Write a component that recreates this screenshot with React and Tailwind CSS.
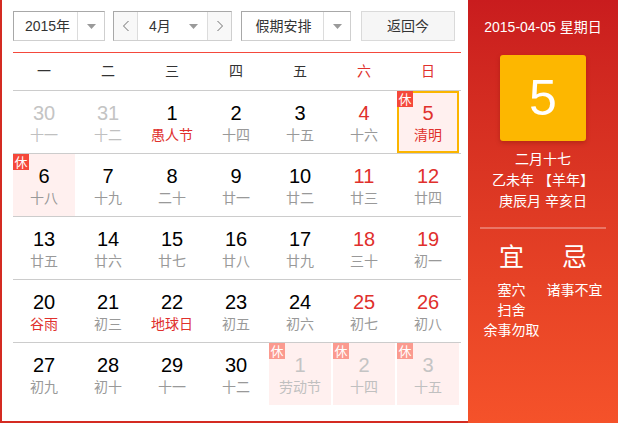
import React from 'react';

const sans = { fontFamily: '"Liberation Sans", Arial, "Noto Sans CJK SC", sans-serif' };

const weeks = [
  [
    { d: 30, l: '十一', o: true },
    { d: 31, l: '十二', o: true },
    { d: 1, l: '愚人节', f: true },
    { d: 2, l: '十四' },
    { d: 3, l: '十五' },
    { d: 4, l: '十六' },
    { d: 5, l: '清明', f: true, rest: true, today: true },
  ],
  [
    { d: 6, l: '十八', rest: true },
    { d: 7, l: '十九' },
    { d: 8, l: '二十' },
    { d: 9, l: '廿一' },
    { d: 10, l: '廿二' },
    { d: 11, l: '廿三' },
    { d: 12, l: '廿四' },
  ],
  [
    { d: 13, l: '廿五' },
    { d: 14, l: '廿六' },
    { d: 15, l: '廿七' },
    { d: 16, l: '廿八' },
    { d: 17, l: '廿九' },
    { d: 18, l: '三十' },
    { d: 19, l: '初一' },
  ],
  [
    { d: 20, l: '谷雨', f: true },
    { d: 21, l: '初三' },
    { d: 22, l: '地球日', f: true },
    { d: 23, l: '初五' },
    { d: 24, l: '初六' },
    { d: 25, l: '初七' },
    { d: 26, l: '初八' },
  ],
  [
    { d: 27, l: '初九' },
    { d: 28, l: '初十' },
    { d: 29, l: '十一' },
    { d: 30, l: '十二' },
    { d: 1, l: '劳动节', o: true, rest: true },
    { d: 2, l: '十四', o: true, rest: true },
    { d: 3, l: '十五', o: true, rest: true },
  ],
];

const weekdays = ['一', '二', '三', '四', '五', '六', '日'];

const Caret = () => (
  <svg width="9" height="5" viewBox="0 0 9 5">
    <path d="M0 0h9L4.5 5z" fill="#9a9a9a" />
  </svg>
);

const Chevron = ({ dir }) => (
  <svg width="8" height="12" viewBox="0 0 8 12">
    <polyline
      points={dir === 'left' ? '6.5,1 1.5,6 6.5,11' : '1.5,1 6.5,6 1.5,11'}
      fill="none"
      stroke="#707070"
      strokeWidth="1"
    />
  </svg>
);

const Day = ({ day, col }) => {
  const weekend = col >= 5;
  let numColor = 'text-black';
  if (day.o) numColor = 'text-[#c4c4c4]';
  else if (weekend || day.today) numColor = 'text-[#e0302c]';
  let lunarColor = 'text-[#999]';
  if (day.o) lunarColor = 'text-[#c0c0c0]';
  else if (day.f) lunarColor = 'text-[#e0302c]';

  return (
    <div
      className={`relative w-[62px] h-[62px] flex flex-col items-center ${day.rest ? 'bg-[#fff0ef]' : ''} ${
        day.today ? 'border-2 border-[#fbb500] pt-[9px]' : 'pt-[11px]'
      }`}
    >
      {day.rest && (
        <span
          className={`absolute w-[16px] h-[16px] flex items-center justify-center text-[13px] leading-none text-white ${
            day.o ? 'bg-[#fb9a8f]' : 'bg-[#f5483a]'
          } ${day.today ? '-top-[2px] -left-[2px]' : 'top-0 left-0'}`}
        >
          休
        </span>
      )}
      <span className={`text-[20px] leading-[22px] ${numColor}`}>{day.d}</span>
      <span className={`mt-[3px] text-[14px] leading-[16px] ${lunarColor}`}>{day.l}</span>
    </div>
  );
};

export default function App() {
  return (
    <div className="flex w-[618px] h-[423px] overflow-hidden bg-white" style={sans}>
      {/* calendar */}
      <div className="w-[468px] h-[423px] border-l-2 border-b-2 border-[#d42b22] bg-white">
        <div className="pt-[11px] pl-[11px] w-[459px]">
          <div className="flex h-[30px] text-[14px] text-[#333]">
            <div className="flex w-[92px] border border-[#cfcfcf] border-t-[#a8a8a8] border-l-[#a8a8a8]">
              <div className="w-[63px] flex items-center justify-center pl-[4px]">2015年</div>
              <div className="flex-1 flex items-center justify-center border-l border-[#dcdcdc]">
                <Caret />
              </div>
            </div>
            <div className="ml-[8px] flex w-[119px] border border-[#cfcfcf] border-t-[#a8a8a8] border-l-[#a8a8a8]">
              <div className="w-[24px] flex items-center justify-center bg-[#f8f8f8] border-r border-[#dcdcdc]">
                <Chevron dir="left" />
              </div>
              <div className="flex-1 flex items-center justify-between pl-[11px] pr-[9px]">
                <span>4月</span>
                <Caret />
              </div>
              <div className="w-[24px] flex items-center justify-center bg-[#f8f8f8] border-l border-[#dcdcdc]">
                <Chevron dir="right" />
              </div>
            </div>
            <div className="ml-[9px] flex w-[110px] border border-[#cfcfcf] border-t-[#a8a8a8] border-l-[#a8a8a8]">
              <div className="w-[81px] flex items-center justify-center pl-[2px]">假期安排</div>
              <div className="flex-1 flex items-center justify-center border-l border-[#dcdcdc]">
                <Caret />
              </div>
            </div>
            <div className="ml-[10px] w-[94px] flex items-center justify-center bg-[#f6f6f6] border border-[#dadada]">
              返回今
            </div>
          </div>

          <div className="mt-[11px] w-[448px] h-px bg-[#f4493c]" />

          <div className="flex w-[448px] h-[37px] items-center text-[14px]">
            {weekdays.map((w, i) => (
              <div
                key={w}
                className={`w-[64px] pr-[2px] text-center ${i >= 5 ? 'text-[#e0302c]' : 'text-[#333]'}`}
              >
                {w}
              </div>
            ))}
          </div>

          {weeks.map((week, r) => (
            <div key={r} className="w-[448px] border-t border-[#cccccc]">
              <div className="flex gap-[2px]">
                {week.map((day, c) => (
                  <Day key={c} day={day} col={c} />
                ))}
              </div>
            </div>
          ))}
        </div>
      </div>

      {/* today panel */}
      <div className="w-[150px] h-[423px] bg-linear-to-b from-[#c91c1e] to-[#f5522a] text-white flex flex-col items-center">
        <div className="mt-[17px] text-[14px] leading-[20px]">2015-04-05 星期日</div>
        <div className="mt-[18px] w-[86px] h-[86px] rounded-[3px] bg-[#fdb700] shadow-[0_2px_4px_rgba(120,20,0,0.35)] flex items-center justify-center text-[50px] leading-none">
          5
        </div>
        <div className="mt-[8px] text-[14px] leading-[21px] text-center">
          <div>二月十七</div>
          <div className="whitespace-nowrap">乙未年 【羊年】</div>
          <div>庚辰月 辛亥日</div>
        </div>
        <div className="mt-[15px] w-[126px] h-[2px] bg-white/30" />
        <div className="mt-[13px] w-[126px] grid grid-cols-2">
          <div className="flex flex-col items-center">
            <div className="text-[25px] leading-[30px]">宜</div>
            <div className="mt-[8px] text-[14px] leading-[20px] text-center">
              <div>塞穴</div>
              <div>扫舍</div>
              <div className="whitespace-nowrap">余事勿取</div>
            </div>
          </div>
          <div className="flex flex-col items-center">
            <div className="text-[25px] leading-[30px]">忌</div>
            <div className="mt-[8px] text-[14px] leading-[20px] text-center">
              <div className="whitespace-nowrap">诸事不宜</div>
            </div>
          </div>
        </div>
      </div>
    </div>
  );
}
